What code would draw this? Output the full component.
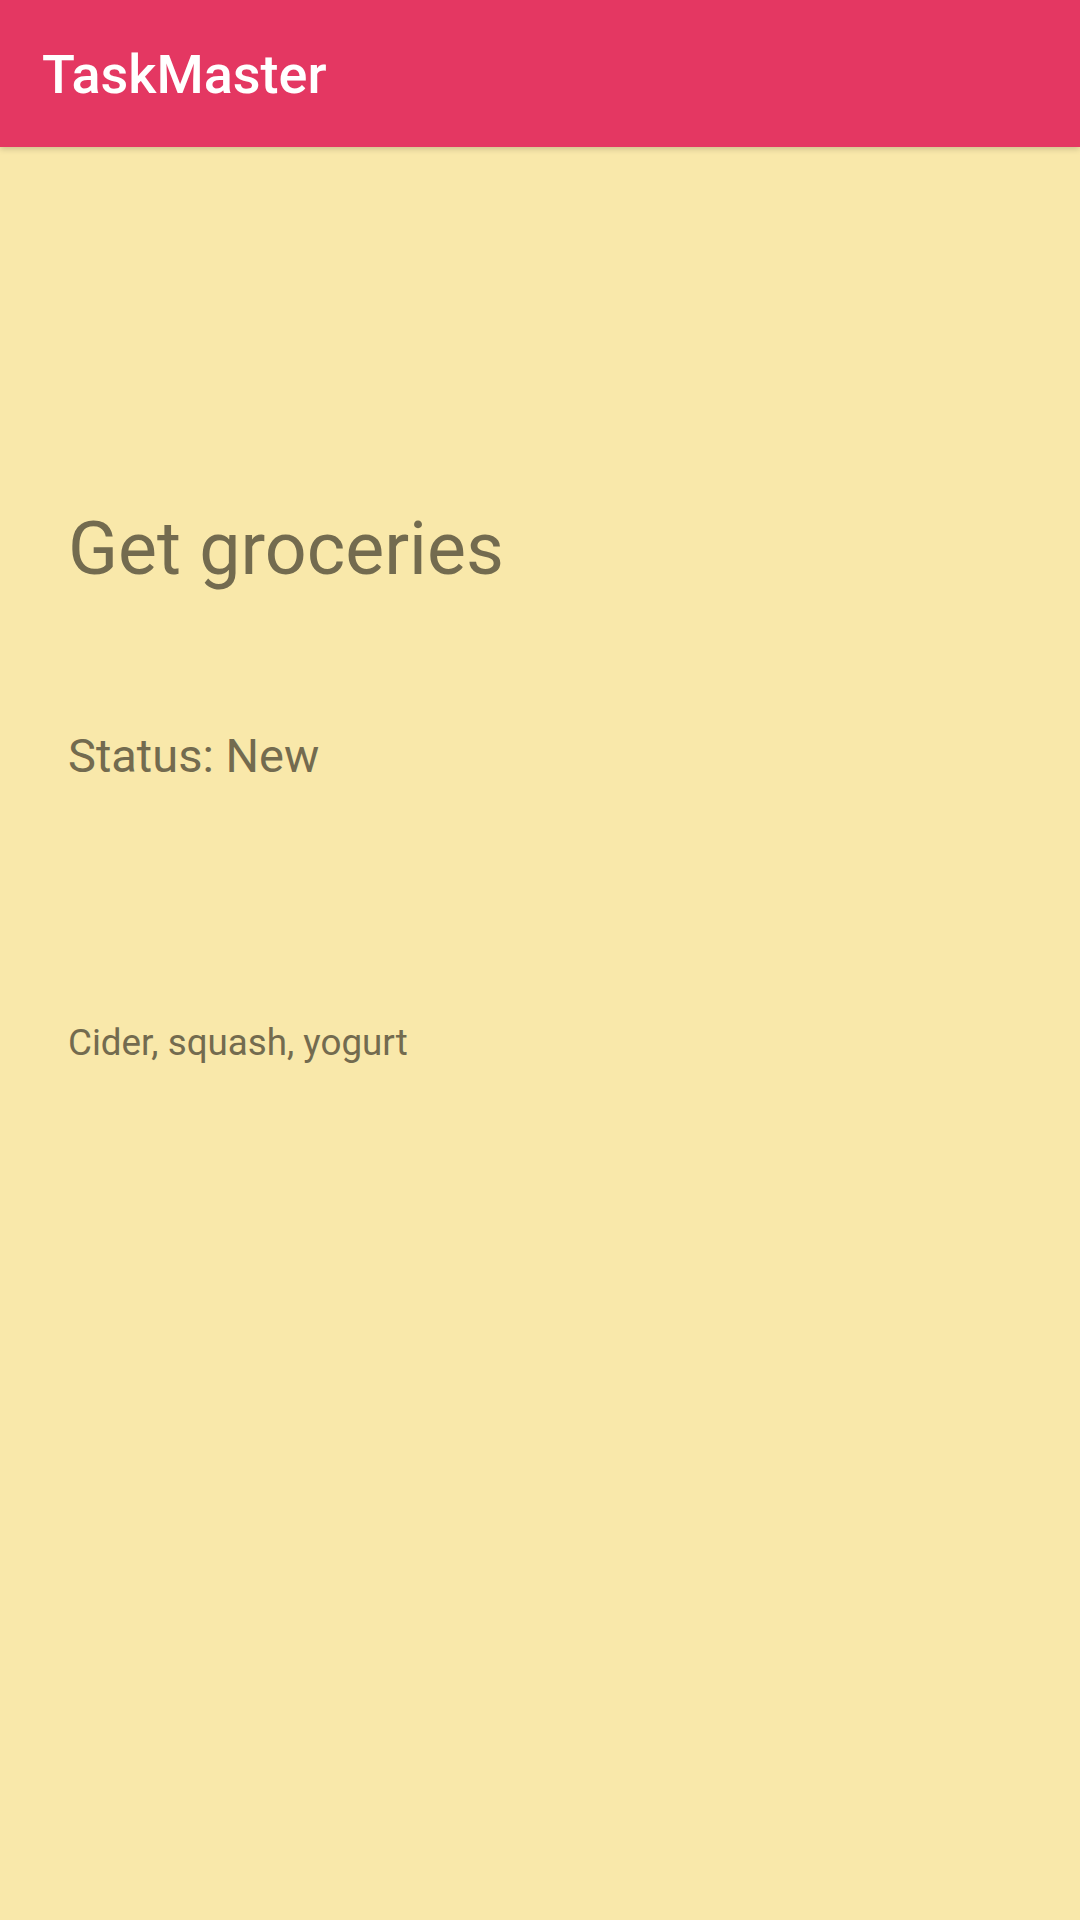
export default function App() {
  return (
    <div className="min-h-[1920px] w-[1080px] bg-[#f9e8aa] font-['Roboto',sans-serif]">
      <header className="h-[147px] bg-[#e43762] px-[42px] pt-[48px] shadow-[0_2px_6px_rgba(0,0,0,0.18)] relative z-10">
        <h1 className="text-[54px] leading-none font-medium text-white">TaskMaster</h1>
      </header>

      <main className="px-[68px] pt-[366px] text-[#736b4f]">
        <h2 className="text-[73.5px] leading-none">Get groceries</h2>
        <p className="mt-[145px] text-[47px] leading-none">Status: New</p>
        <p className="mt-[246px] text-[36.75px] leading-none">Cider, squash, yogurt</p>
      </main>
    </div>
  );
}
